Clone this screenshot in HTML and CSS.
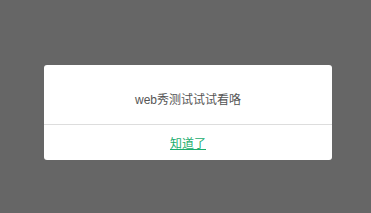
FILE: index.html
```html
<!DOCTYPE html>
<html lang="zh-CN">
<head>
  <meta charset="UTF-8">
  <title>提示</title>
  <link rel="stylesheet" href="styles.css">
</head>
<body>
  <div class="mask">
    <div class="dialog">
      <div class="dialog-body">web秀测试试试看咯</div>
      <div class="dialog-footer">
        <a href="#" class="btn-ok">知道了</a>
      </div>
    </div>
  </div>
</body>
</html>
```

FILE: styles.css
```css
html, body {
  margin: 0;
  height: 100%;
}

body {
  font-family: "Liberation Sans", "Noto Sans CJK SC", sans-serif;
  background-color: #666;
}

.mask {
  padding: 65px 0 0 44px;
}

.dialog {
  width: 288px;
  background: #fff;
  border-radius: 3px;
}

.dialog-body {
  padding: 26px 10px 15px;
  line-height: 18px;
  font-size: 12px;
  color: #555;
  text-align: center;
  border-bottom: 1px solid #ddd;
}

.dialog-footer {
  height: 35px;
  line-height: 35px;
  text-align: center;
}

.btn-ok {
  font-size: 12px;
  color: #1aad6e;
  text-decoration: underline;
}
```
